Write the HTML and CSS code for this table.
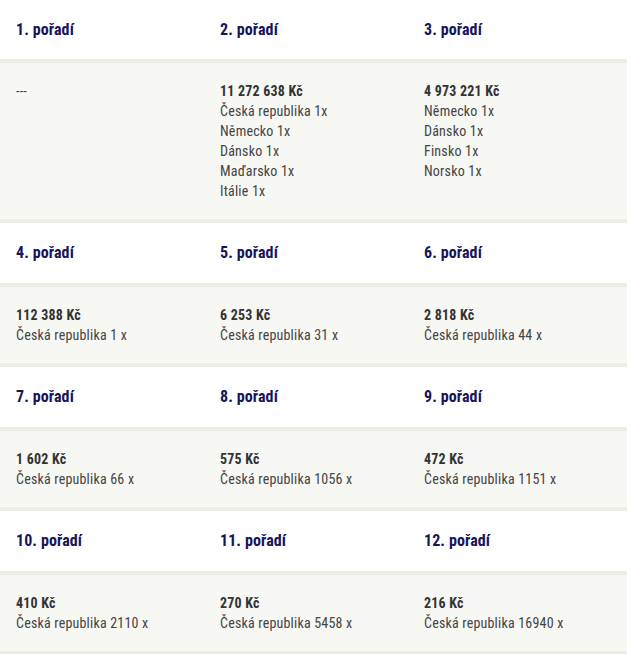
FILE: index.html
```html
<!DOCTYPE html>
<html lang="cs">
<head>
<meta charset="utf-8">
<link rel="stylesheet" href="styles.css">
</head>
<body>
<div class="table">
  <div class="row head first">
    <div class="cell">1. pořadí</div>
    <div class="cell">2. pořadí</div>
    <div class="cell">3. pořadí</div>
  </div>
  <div class="row body">
    <div class="cell"><div class="line">---</div></div>
    <div class="cell">
      <div class="amount">11 272 638 Kč</div>
      <div class="line">Česká republika 1x</div>
      <div class="line">Německo 1x</div>
      <div class="line">Dánsko 1x</div>
      <div class="line">Maďarsko 1x</div>
      <div class="line">Itálie 1x</div>
    </div>
    <div class="cell">
      <div class="amount">4 973 221 Kč</div>
      <div class="line">Německo 1x</div>
      <div class="line">Dánsko 1x</div>
      <div class="line">Finsko 1x</div>
      <div class="line">Norsko 1x</div>
    </div>
  </div>
  <div class="row head">
    <div class="cell">4. pořadí</div>
    <div class="cell">5. pořadí</div>
    <div class="cell">6. pořadí</div>
  </div>
  <div class="row body">
    <div class="cell"><div class="amount">112 388 Kč</div><div class="line">Česká republika 1 x</div></div>
    <div class="cell"><div class="amount">6 253 Kč</div><div class="line">Česká republika 31 x</div></div>
    <div class="cell"><div class="amount">2 818 Kč</div><div class="line">Česká republika 44 x</div></div>
  </div>
  <div class="row head">
    <div class="cell">7. pořadí</div>
    <div class="cell">8. pořadí</div>
    <div class="cell">9. pořadí</div>
  </div>
  <div class="row body">
    <div class="cell"><div class="amount">1 602 Kč</div><div class="line">Česká republika 66 x</div></div>
    <div class="cell"><div class="amount">575 Kč</div><div class="line">Česká republika 1056 x</div></div>
    <div class="cell"><div class="amount">472 Kč</div><div class="line">Česká republika 1151 x</div></div>
  </div>
  <div class="row head">
    <div class="cell">10. pořadí</div>
    <div class="cell">11. pořadí</div>
    <div class="cell">12. pořadí</div>
  </div>
  <div class="row body">
    <div class="cell"><div class="amount">410 Kč</div><div class="line">Česká republika 2110 x</div></div>
    <div class="cell"><div class="amount">270 Kč</div><div class="line">Česká republika 5458 x</div></div>
    <div class="cell"><div class="amount">216 Kč</div><div class="line">Česká republika 16940 x</div></div>
  </div>
</div>
</body>
</html>
```

FILE: styles.css
```css
html, body {
  margin: 0;
  padding: 0;
  background: #ffffff;
}
body {
  font-family: "Roboto", "Liberation Sans", sans-serif;
  font-stretch: 75%;
  color: #3a3a3a;
}
.table {
  display: flex;
  flex-direction: column;
}
.row {
  display: grid;
  grid-template-columns: 204px 204px 1fr;
  border-bottom: 4px solid #edece6;
}
.cell {
  padding-left: 16px;
}
.head {
  background: #ffffff;
  height: 60px;
  align-items: center;
}
.head.first {
  height: 59px;
}
.head .cell {
  font-size: 16px;
  font-weight: 700;
  color: #15155c;
  line-height: 20px;
  letter-spacing: 0.1px;
}
.body {
  background: #f7f7f3;
  padding: 18px 0 18px;
}
.amount {
  font-size: 14px;
  font-weight: 700;
  line-height: 20px;
  color: #333333;
  letter-spacing: 0.2px;
}
.line {
  font-size: 14px;
  line-height: 20px;
  color: #444444;
  letter-spacing: 0.2px;
}
```
